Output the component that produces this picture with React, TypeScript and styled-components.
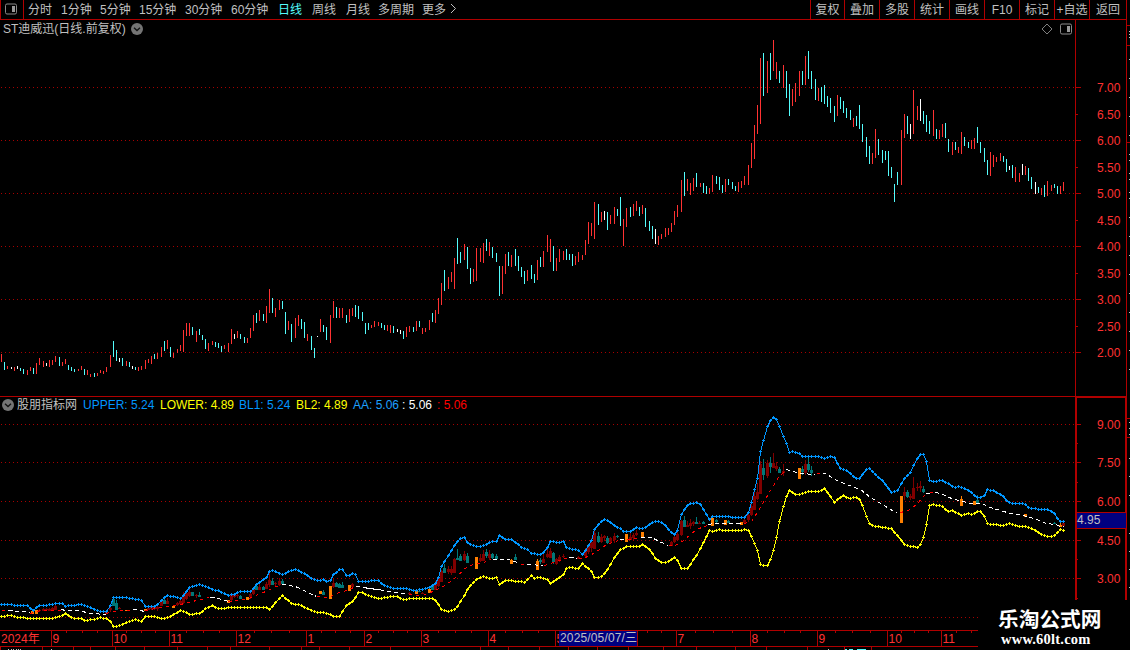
import React from "react";
import styled, { createGlobalStyle } from "styled-components";

const C = {
  line: "#b00000",
  grid: "#a80000",
  label: "#ff3232",
  text: "#c0c0c0",
  up: "#ff3232",
  down: "#54fcfc",
  flat: "#ffffff",
  blue: "#0096ff",
  yellow: "#ffff00",
};

const SANS = '"Liberation Sans", "Noto Sans CJK SC", sans-serif';

const GlobalStyle = createGlobalStyle`
  html, body { margin: 0; background: #000; overflow: hidden; }
  svg { display: block; flex: none; }
`;

/* ---------- data: every block has a pixel origin, values are in thirds of a pixel ---------- */

type Block = { x: number; y: number; d: string };

const PRICE: Block[] = [
  {
    x: 0, y: 270,
    d: `4 252 276 r,13 276 300 c,22 288 297 r,34 291 297 w,43 291 303 r,52 288 297 w,61 294 303 c,70 297 312 c,82 300 315 r,91 291 303 r,100 294 312 c,109 279 312 r,118 264 285 r,130 273 291 r,139 279 288 w,148 270 291 r,157 270 285 r,166 258 276 r,178 261 288 c,187 276 288 r,196 267 282 r,205 285 300 c,214 291 303 c,223 297 306 c,235 297 303 r,244 288 300 r,253 297 315 c,262 300 315 r,271 312 321 r,283 309 321 c,292 309 318 r,301 300 309 r,310 303 312 r,319 291 306 r,331 255 291 r,340 213 261 c,349 240 273 c,358 264 276 w,367 264 288 c,379 273 288 r,388 276 291 c,397 288 297 w,406 291 300 c,415 291 303 r,424 288 300 r,436 270 297 r,445 267 279 r,454 258 282 r,463 252 267 c,472 249 267 r,484 231 261 r,493 213 243 c,502 210 237 r,511 231 261 c,520 249 264 r,532 237 249 r,541 225 243 r,550 180 246 r,559 159 198 r,568 159 198 r,577 171 195 c,589 183 216 r,598 177 195 c,607 195 210 c,616 207 237 c,625 219 243 r,637 213 225 r,646 216 231 c,655 219 234 c,664 228 246 c,673 225 237 r,685 219 246 r,694 177 222 r,703 192 207 w,712 183 204 r,721 192 207 c,733 201 219 c,742 204 219 r,751 174 204 r,760 135 183 r,769 129 159 c,778 120 153 r,790 132 153 c,799 108 159 r,808 57 129 r,817 84 129 c,826 114 141 r,838 90 120 r,847 93 117 c,856 126 192 c,865 153 180 r,874 162 216 c,886 144 204 r,895 135 168 r,904 147 177 c,913 156 204 c,922 192 213 r,934 198 240 c,943 234 264 c,952 198 201 w,961 147 186 r,970 165 186 c,979 171 210 c,991 135 219 r,1000 93 144 r,1009 111 144 c,1018 114 144 r,1027 114 144 r,1039 135 159 c,1048 117 156 r,1057 114 138 r,1066 105 141 c,1075 108 147 c,1087 126 153 c`,
  },
  {
    x: 360, y: 220,
    d: `16 309 342 c,25 309 330 c,34 315 324 r,43 303 321 r,55 306 318 r,64 309 324 c,73 315 330 c,82 315 333 r,91 315 339 r,100 318 339 c,112 327 336 w,121 330 342 w,130 333 357 c,139 321 351 r,148 318 336 r,160 321 336 c,169 303 333 r,178 303 321 c,187 324 342 r,196 324 336 r,208 300 330 r,217 279 306 c,226 270 309 r,235 234 282 r,244 189 255 r,253 150 213 c,265 171 207 r,274 156 186 r,283 114 207 r,292 54 132 c,301 96 129 c,313 72 120 r,322 81 147 c,331 144 192 c,340 147 186 r,349 84 183 r,361 84 126 r,370 69 129 r,379 57 93 c,388 66 108 r,397 81 114 c,409 99 126 c,418 138 228 c,427 138 222 r,436 102 162 r,445 96 138 c,454 105 141 r,466 87 138 c,475 108 153 c,484 141 171 c,493 153 192 c,502 150 183 r,514 135 177 c,523 162 189 c,532 120 180 r,541 111 141 c,550 93 141 r,562 45 96 r,571 57 126 r,580 78 153 c,589 114 153 r,598 87 126 r,610 93 120 r,619 87 120 c,628 102 120 c,637 102 138 c,646 108 135 r,655 96 126 r,667 105 120 r,676 60 105 r`,
  },
  {
    x: 580, y: 185,
    d: `25 111 177 r,34 114 153 r,43 51 162 r,55 57 120 c,64 81 111 r,73 78 105 w,82 81 135 c,91 90 117 r,103 66 117 r,112 72 93 c,121 36 123 c,130 102 183 r,139 69 126 r,151 66 96 c,160 57 93 r,169 48 78 r,178 66 93 c,187 60 87 r,196 69 126 c`,
  },
  {
    x: 640, y: 30,
    d: `28 573 603 c,37 588 627 c,46 597 642 w,55 618 645 r,64 612 627 r,76 594 621 r,85 594 615 r,94 579 606 r,103 543 585 r,112 525 561 r,124 450 546 r,133 426 498 c,142 447 483 r,151 459 495 r,160 444 483 r,169 429 471 c,181 459 471 r,190 459 489 c,199 468 492 c,208 474 492 r,217 435 486 r,229 438 462 c,238 441 480 c,247 465 489 c,256 447 486 r,265 447 465 c,277 456 477 c,286 468 483 c,295 456 486 r,304 453 474 r,313 438 465 r,325 405 465 r,334 339 414 r,343 285 387 r,352 225 312 r,361 84 282 r,370 69 198 c,382 93 189 r,391 69 150 c,400 30 123 r,409 96 147 r,418 123 159 c,430 105 174 r,439 123 204 c,448 162 258 c,457 177 228 r,466 159 216 r,478 123 198 r,487 123 165 c,496 78 165 r,505 63 147 c,514 123 177 c,526 147 210 c,535 174 213 r,544 171 216 c,553 165 222 c,562 198 231 c,571 204 249 c,583 228 276 c,592 195 258 r,601 201 237 c,610 213 249 c,619 234 264 c,631 240 270 c,640 264 291 r,649 258 288 c,658 225 297 c,667 282 336 c,679 321 381 c,688 348 402 c,697 369 402 r,706 297 384 r,715 327 375 c,727 360 399 c,736 363 390 c,745 363 438 c,754 411 444 c,763 462 516 c,772 426 465 c`,
  },
  {
    x: 880, y: 80,
    d: `64 150 315 r,73 102 174 r,82 108 162 c,91 132 177 w,100 30 162 r,112 78 120 r,121 57 123 w,130 93 132 c,139 105 156 c,148 123 162 c,160 90 168 r,169 147 177 c,178 150 177 r,187 132 171 r,196 129 174 c,205 177 216 c,217 186 225 r,226 186 210 c,235 201 219 r,244 156 222 r,253 171 198 c,265 186 204 c,274 180 207 r,283 174 207 r,292 141 189 c,301 186 219 c,313 204 246 c,322 240 285 c,331 216 288 r,340 225 261 r,349 231 246 r,361 219 243 r,370 228 246 c,379 237 276 c,388 258 270 w,397 255 294 c,406 261 306 r,418 279 306 r,427 252 285 w,436 258 285 r,445 264 303 c,454 291 327 c,466 306 342 w,475 321 339 c,484 324 345 r,493 315 351 c,502 303 348 r,514 315 333 r,523 312 324 c,532 318 342 c,541 318 342 r,550 306 333 r`,
  },
];

const UPPER: Block[] = [
  { x: 0, y: 560, d: `4 133,82 136,100 151,109 142,118 136,130 136,166 130,187 130,196 139,205 136,247 133,265 139,301 154,318 153,331 136,340 113,379 112,424 121,436 139,466 138,500 106,544 115,571 80,598 73,628 82,637 89,655 90,685 106,700 103,721 95,751 94,769 72,799 52,808 34,817 31,847 43,871 30,889 29,919 42,937 58,952 61,970 58,979 64,991 60,1000 43,1018 29,1027 29,1039 46,1048 45,1057 40,1066 44,1075 64` },
  { x: 360, y: 490, d: `7 273,55 271,73 286,100 296,139 295,165 301,187 298,208 293,225 280,235 262,244 230,253 213,274 181,286 159,301 144,313 142,325 160,334 167,355 170,373 166,391 154,409 154,418 136,436 148,457 148,484 172,505 178,514 190,541 193,556 184,571 155,595 157,610 155,619 173,655 180,667 194,676 180,694 150,703 118,721 96,733 89,748 94,760 106,781 116,790 125,811 124,829 113,847 116,862 110,880 95,900 94,910 100,925 117,943 133,955 115,964 73,976 51,991 40,1009 37` },
  { x: 700, y: 400, d: `1 312,28 358,37 350,136 351,145 337,154 306,163 268,172 235,181 154,190 121,202 80,211 61,220 51,229 58,238 80,250 110,259 130,268 157,280 154,298 161,307 169,355 169,373 175,391 169,403 172,421 205,445 215,466 234,478 236,499 207,508 205,526 223,547 241,574 277,592 271,613 234,631 217,640 196,652 175,661 163,670 163,679 184` },
  { x: 900, y: 390, d: `88 271,100 274,124 271,145 280,160 292,181 289,214 307,229 321,247 321,253 315,262 298,280 300,307 315,325 336,340 341,370 340,391 354,430 358,445 358,463 370,472 386,481 395,490 395` },
];

const LOWER: Block[] = [
  { x: 0, y: 560, d: `4 169,37 166,55 172,91 175,150 175,184 169,196 160,220 174,244 175,253 181,280 178,301 172,320 174,331 184,340 200,358 196,379 187,406 178,424 184,436 169,460 169,484 175,502 172,520 163,541 151,571 163,598 160,616 145,637 136,655 144,694 142,799 142,808 148,826 127,847 106,874 130,904 136,940 154,985 159,1000 169,1018 169,1039 136,1057 123,1075 97` },
  { x: 360, y: 490, d: `7 308,31 320,55 325,97 319,112 320,130 328,160 325,217 326,226 331,235 342,244 358,265 364,283 358,292 350,313 316,325 292,349 268,370 259,388 265,409 263,418 283,433 272,484 274,493 277,514 256,523 265,535 262,562 268,571 280,595 265,610 253,619 235,634 232,655 235,667 220,694 243,703 262,727 259,748 230,766 196,781 178,799 169,835 169,847 163,868 179,889 208,907 220,928 214,943 202,955 214,964 235,982 234,1009 196` },
  { x: 700, y: 400, d: `1 445,28 391,40 394,58 388,76 391,124 391,136 385,145 391,154 409,172 451,181 493,190 496,202 496,211 478,220 451,229 412,238 364,250 320,259 289,268 272,286 283,310 280,328 274,358 274,373 265,403 307,415 295,430 287,448 295,469 293,481 301,499 349,511 376,526 379,574 385,613 433,634 439,652 442,661 433,670 412,679 373` },
  { x: 900, y: 390, d: `88 346,100 343,127 349,145 364,157 361,184 376,202 371,217 373,235 360,250 369,262 401,280 403,310 406,328 400,355 409,379 409,400 418,430 436,448 439,463 436,472 427,481 418,490 420` },
];

/* Middle band: each run carries its own colour and is drawn dashed. */
const MIDDLE: (Block & { red?: boolean })[] = [
  { x: 0, y: 560, d: `4 151,12 151`, red: true },
  { x: 0, y: 560, d: `24 151,60 154,90 158` },
  { x: 0, y: 560, d: `90 160,105 154,130 152,184 150`, red: true },
  { x: 0, y: 560, d: `184 148,196 150,235 151,270 160,318 163` },
  { x: 0, y: 560, d: `318 160,340 153,379 151,400 148`, red: true },
  { x: 0, y: 560, d: `400 148,436 153` },
  { x: 0, y: 560, d: `436 152,500 140,540 134,600 118,628 112`, red: true },
  { x: 0, y: 560, d: `632 112,655 115,685 123` },
  { x: 0, y: 560, d: `685 124,740 118,790 97,830 78,842 72`, red: true },
  { x: 0, y: 560, d: `847 72,885 80,950 109` },
  { x: 0, y: 560, d: `952 109,990 112,1000 103,1048 87,1066 80`, red: true },
  { x: 0, y: 560, d: `1068 79,1090 82,1140 88` },
  { x: 360, y: 490, d: `18 295,55 298,85 304,146 313` },
  { x: 360, y: 490, d: `148 313,187 315,226 302,260 283,285 262,325 226,345 222,380 213,395 208`, red: true },
  { x: 360, y: 490, d: `397 208,445 208,480 221` },
  { x: 360, y: 490, d: `482 222,500 224`, red: true },
  { x: 360, y: 490, d: `502 224,550 226` },
  { x: 360, y: 490, d: `553 225,580 216,625 203`, red: true },
  { x: 360, y: 490, d: `628 203,652 205` },
  { x: 360, y: 490, d: `655 206,670 205,706 187,740 162,776 150`, red: true },
  { x: 360, y: 490, d: `778 149,800 149` },
  { x: 360, y: 490, d: `802 148,840 142`, red: true },
  { x: 360, y: 490, d: `841 142,875 142,905 158,925 165` },
  { x: 360, y: 490, d: `926 166,945 167,970 150,1010 117,1042 105`, red: true },
  { x: 360, y: 490, d: `1045 104,1060 100,1140 100` },
  { x: 700, y: 400, d: `110 371,130 370` },
  { x: 700, y: 400, d: `132 370,155 363,180 322,210 270,235 231,252 213`, red: true },
  { x: 700, y: 400, d: `258 209,298 219,345 223` },
  { x: 700, y: 400, d: `350 220,366 220`, red: true },
  { x: 700, y: 400, d: `368 220,377 221,415 244,480 269,510 291,592 340` },
  { x: 700, y: 400, d: `602 338,625 330,650 312,675 284`, red: true },
  { x: 700, y: 400, d: `676 281,688 280` },
  { x: 700, y: 400, d: `689 277,702 277`, red: true },
  { x: 900, y: 390, d: `105 307,120 309,155 325,210 340,245 341,270 353,330 369,370 376,410 389,440 399,465 402,480 409,490 409` },
];

/* x, wick top, body top, body bottom, wick bottom, colour (r dark red, t teal, o orange) */
const CANDLES: Block[] = [
  { x: 0, y: 560, d: `97 155 155 164 164 o,109 150 150 163 163 o,118 147 150 154 157 r,130 145 147 153 153 r,139 145 147 152 152 r,148 145 149 153 153 r,157 142 146 151 151 r,166 136 140 150 150 r,319 154 156 162 162 r,331 140 145 152 158 r,340 113 117 139 139 t,349 120 130 151 151 t,358 143 145 148 148 r,379 150 150 153 153 o,436 147 147 154 154 o,445 142 144 152 152 r,454 139 143 149 152 r,463 138 141 147 150 r,472 136 141 147 153 r,484 122 125 138 138 r,493 115 122 132 132 t,502 115 125 132 132 r,520 138 138 144 144 o,532 128 131 137 140 r,541 118 125 132 135 r,550 98 108 130 132 r,559 90 99 118 121 r,568 85 96 110 112 r,577 96 97 108 108 t,589 103 107 110 116 r,598 98 105 111 111 t,685 121 121 131 131 o,694 100 104 120 126 r,703 105 107 111 114 r,712 102 106 110 116 r,721 106 108 118 118 t,742 111 111 122 122 o,751 98 102 112 117 r,760 82 87 104 106 r,769 75 80 90 90 t,778 72 81 90 90 r,790 78 82 90 90 t,799 66 73 89 89 r,808 39 61 76 82 r,817 54 63 75 75 t,826 67 70 74 80 r,838 54 63 75 80 r,847 57 64 72 72 t,961 93 93 103 103 o,970 90 98 106 106 t,991 78 78 118 118 o,1000 57 70 81 86 r,1009 66 70 82 82 t,1018 69 73 84 84 t,1027 66 76 84 84 t,1048 75 75 93 93 o,1057 69 72 81 84 r` },
  { x: 360, y: 490, d: `148 308 309 313 313 r,169 303 303 313 313 o,178 297 304 307 307 t,187 307 310 313 313 r,208 297 297 310 310 o,217 284 290 302 302 t,226 275 280 302 302 r,235 262 266 288 292 r,244 240 244 278 278 r,253 222 236 249 249 t,265 230 239 248 252 r,274 229 238 250 255 r,283 204 208 249 249 r,292 177 204 210 212 t,301 192 200 213 213 t,313 183 194 210 214 r,322 189 200 220 220 t,349 203 203 238 238 o,361 192 206 213 217 r,370 180 192 213 213 r,379 177 188 198 206 t,388 180 194 205 210 r,397 189 194 205 209 t,409 194 200 208 210 t,454 208 211 222 222 o,466 192 203 212 212 t,532 207 213 240 240 o,541 204 210 218 222 t,550 192 207 221 221 r,562 177 194 203 206 r,571 176 183 206 206 r,580 188 190 216 224 t,589 204 208 222 227 r,598 196 202 211 217 r,610 194 199 203 206 r,655 199 203 209 209 r,676 174 180 200 204 r,685 162 167 188 193 r,694 144 156 175 186 r,703 120 130 177 177 r,715 126 140 157 160 t,724 132 142 156 160 r,733 136 140 146 154 r,742 139 144 161 163 t,751 141 146 158 160 r,763 130 139 150 160 r,772 135 138 143 144 t,799 133 133 158 158 o,811 130 142 150 152 r,820 129 136 144 150 r,829 122 129 137 140 r,847 128 128 144 144 o,934 153 156 168 170 r,943 138 143 157 160 r,952 120 132 152 152 r,964 90 95 135 138 r,973 78 92 113 113 t,982 93 105 112 112 r,991 88 100 108 117 r,1000 94 98 104 110 r,1009 81 97 104 104 t,1018 94 99 103 103 r,1030 95 97 104 104 t,1057 84 84 108 108 o,1069 87 90 97 100 t,1096 92 92 107 107 o,1105 90 93 99 100 t` },
  { x: 700, y: 400, d: `124 366 366 375 375 o,133 355 361 370 370 r,145 338 345 362 366 r,154 310 318 345 350 r,163 272 288 332 332 r,172 250 278 297 300 r,181 184 192 284 284 r,190 177 204 227 240 t,202 180 189 228 234 r,211 173 189 203 220 t,220 159 189 204 204 r,229 187 200 207 214 r,238 201 208 219 219 t,250 194 214 220 228 r,298 206 206 239 239 o,307 200 207 216 225 t,316 182 192 220 227 r,325 171 192 212 216 t,334 200 210 221 230 t,604 288 288 369 369 o,613 263 278 290 300 r,622 270 276 291 294 t,631 283 290 294 300 r,640 231 264 297 297 r,652 250 262 266 275 r,661 243 260 264 276 r,670 260 267 278 280 t` },
  { x: 900, y: 390, d: `184 320 327 350 350 o,223 333 333 347 347 o,232 316 330 339 342 t,376 374 374 383 383 o,463 396 399 401 402 t,481 400 407 413 413 o,490 392 400 410 410 r` },
];

const third = (o: number, v: string) => o + Math.floor(Number(v) / 3);

const bars = PRICE.flatMap((b) =>
  b.d.split(",").map((s) => {
    const [x, t, e, c] = s.trim().split(" ");
    return { x: third(b.x, x), top: third(b.y, t), end: third(b.y, e), c };
  })
);

const points = (blocks: Block[]) =>
  blocks.flatMap((b) =>
    b.d.split(",").map((s) => {
      const [x, y] = s.trim().split(" ");
      return [third(b.x, x), third(b.y, y)] as [number, number];
    })
  );

/* One value per trading day, read off the key points. */
const sample = (blocks: Block[]) => {
  const p = points(blocks);
  return bars.map(({ x }) => {
    let i = 1;
    while (i < p.length - 1 && p[i][0] < x) i++;
    const [x0, y0] = p[i - 1];
    const [x1, y1] = p[i];
    const k = Math.max(0, Math.min(1, (x - x0) / (x1 - x0 || 1)));
    return [x, Math.round(y0 + (y1 - y0) * k)];
  });
};

const candles = CANDLES.flatMap((b) =>
  b.d.split(",").map((s) => {
    const [x, w0, b0, b1, w1, c] = s.trim().split(" ");
    return {
      x: third(b.x, x), w0: third(b.y, w0), b0: third(b.y, b0), b1: third(b.y, b1), w1: third(b.y, w1), c,
    };
  })
);

/* ---------- styled parts ---------- */

const Screen = styled.div`
  position: relative;
  width: 1130px;
  height: 650px;
  overflow: hidden;
  background: #000;
  color: ${C.text};
  font: 12px/18px ${SANS};
  display: flex;
  flex-direction: column;
`;

const Toolbar = styled.div`
  display: flex;
  width: 1127px;
  height: 20px;
  box-sizing: border-box;
  border: solid ${C.line};
  border-width: 0 1px 1px 1px;
  line-height: 20px;
  white-space: nowrap;
  flex: none;
`;

const LayoutButton = styled.div`
  width: 18px;
  padding: 3px 0 0 4px;
  border-right: 1px solid ${C.line};
`;

const Periods = styled.div`
  display: flex;
  flex: 1;
  padding-left: 4px;
`;

const Period = styled.span<{ $w: number; $active?: boolean }>`
  width: ${(p) => p.$w}px;
  color: ${(p) => (p.$active ? C.down : C.text)};
`;

const Tool = styled.div<{ $w: number }>`
  width: ${(p) => p.$w}px;
  box-sizing: border-box;
  border-left: 1px solid ${C.line};
  text-align: center;
`;

const Panel = styled.div<{ $h: number }>`
  display: flex;
  height: ${(p) => p.$h}px;
  box-sizing: border-box;
  flex: none;
`;

const Plot = styled.div<{ $ruled?: boolean }>`
  display: flex;
  flex-direction: column;
  width: 1075px;
  box-sizing: border-box;
  border-bottom: ${(p) => (p.$ruled ? `1px solid ${C.line}` : "0")};
`;

const Caption = styled.div<{ $h: number }>`
  display: flex;
  align-items: center;
  height: ${(p) => p.$h}px;
  padding: 0 2px;
  white-space: nowrap;
  flex: none;
`;

const Title = styled.span`
  width: 128px;
  padding-left: 1px;
  line-height: 19px;
  box-sizing: content-box;
`;

const CaptionTools = styled.div`
  display: flex;
  gap: 7px;
  margin-left: auto;
`;

const IndicatorName = styled.span`
  width: 66px;
  padding-left: 3px;
  line-height: 16px;
`;

const Reading = styled.span<{ $c: string; $w: number }>`
  width: ${(p) => p.$w}px;
  color: ${(p) => p.$c};
  line-height: 16px;
`;

const DateTag = styled.div`
  position: absolute;
  left: 559px;
  top: 631px;
  width: 79px;
  height: 15px;
  line-height: 15px;
  padding-left: 1px;
  box-sizing: border-box;
  background: #000080;
  border-right: 1px solid ${C.line};
  letter-spacing: 0.15px;
  white-space: nowrap;
`;

const PriceTag = styled.div`
  position: absolute;
  left: 1077px;
  top: 512px;
  width: 49px;
  height: 17px;
  box-sizing: border-box;
  line-height: 15px;
  background: #000080;
  border: solid ${C.line};
  border-width: 1px 0;
`;

const Watermark = styled.div`
  position: absolute;
  left: 978px;
  top: 600px;
  width: 152px;
  height: 50px;
  box-sizing: border-box;
  padding: 7px 0 0 20px;
  background: #000;
  color: #fff;
  white-space: nowrap;
`;

const SiteName = styled.div`
  font: bold 20.7px/23px "Noto Sans CJK SC", sans-serif;
`;

const SiteUrl = styled.div`
  font: bold 14.5px/16px "Liberation Serif", serif;
  padding: 1px 0 0 3px;
  letter-spacing: 0.22px;
`;

/* ---------- drawings ---------- */

const PanelIcon = () => (
  <svg width="13" height="12" viewBox="0 0 13 12">
    <rect x="0.5" y="1" width="11" height="10" rx="1.5" fill="none" stroke="#8a8a8a" />
    <rect x="7" y="3" width="3" height="6" fill="#9a9a9a" />
  </svg>
);

const DiamondIcon = () => (
  <svg width="12" height="12" viewBox="0 0 12 12">
    <path d="M6 1 L11 6 L6 11 L1 6 Z" fill="none" stroke="#808080" />
  </svg>
);

const DropIcon = () => (
  <svg width="12" height="12" viewBox="0 0 12 12">
    <circle cx="6" cy="6" r="6" fill="#747474" />
    <path d="M3 4.8 L6 7.6 L9 4.8" fill="none" stroke="#111" strokeWidth="1.3" />
  </svg>
);

const ArrowIcon = () => (
  <svg width="7" height="18" viewBox="0 0 7 18">
    <path d="M1 4 L5.5 8.5 L1 13" fill="none" stroke={C.text} />
  </svg>
);

const GridLine = ({ y }: { y: number }) => (
  <line x1="1" x2="1074" y1={y + 0.5} y2={y + 0.5} stroke={C.grid} strokeDasharray="1 3" />
);

const barColor: Record<string, string> = { r: C.up, c: C.down, w: C.flat };
const candleColor: Record<string, string> = { r: "#800000", t: "#007878", o: "#ff8000" };

const PriceChart = () => (
  <svg width="1075" height="358" viewBox="0 38 1075 358" shapeRendering="crispEdges">
    {[87, 140, 193, 246, 299, 352].map((y) => <GridLine key={y} y={y} />)}
    {bars.map((b) => (
      <rect key={b.x} x={b.x} y={b.top} width="1" height={b.end - b.top} fill={barColor[b.c]} />
    ))}
  </svg>
);

const Band = ({ data, color }: { data: number[][]; color: string }) => (
  <g fill="none" stroke={color}>
    <polyline points={data.map(([x, y]) => `${x + 0.5},${y + 0.5}`).join(" ")} />
    <path d={data.map(([x, y]) => `M${x - 1} ${y + 0.5}h3M${x + 0.5} ${y - 1}v3`).join("")} />
  </g>
);

const BandChart = () => (
  <svg width="1075" height="216" viewBox="0 414 1075 216" shapeRendering="crispEdges">
    {[424, 462, 501, 540, 578, 617].map((y) => <GridLine key={y} y={y} />)}
    {candles.map((k) => (
      <g key={k.x} fill={candleColor[k.c]}>
        <rect x={k.x} y={k.w0} width="1" height={k.w1 - k.w0} />
        <rect x={k.x - 1} y={k.b0} width="3" height={Math.max(1, k.b1 - k.b0)} />
      </g>
    ))}
    {MIDDLE.map((m, i) => (
      <polyline
        key={i}
        points={points([m]).map(([x, y]) => `${x + 0.5},${y + 0.5}`).join(" ")}
        fill="none"
        stroke={m.red ? "#ff0000" : "#ffffff"}
        strokeDasharray={m.red ? "3 4" : "4 3"}
      />
    ))}
    <Band data={sample(UPPER)} color={C.blue} />
    <Band data={sample(LOWER)} color={C.yellow} />
  </svg>
);

const axisText = { fill: C.label, fontSize: 12, fontFamily: SANS };

const PriceAxis = () => (
  <svg width="55" height="377" viewBox="1075 20 55 377">
    <g fill={C.line} shapeRendering="crispEdges">
      <rect x="1075" y="20" width="1" height="377" />
      <rect x="1126" y="20" width="1" height="377" />
      <rect x="1075" y="396" width="52" height="1" />
      {[25, 45, 142].map((y) => <rect key={y} x="1127" y={y} width="3" height="1" />)}
      {[0, 1, 2, 3, 4, 5].map((i) => <rect key={i} x="1075" y={87 + i * 53} width="6" height="1" />)}
      {[0, 1, 2, 3, 4].map((i) => <rect key={i} x="1075" y={114 + i * 53} width="3" height="1" />)}
    </g>
    <g fill="#c0c0c0">
      {[31, 34, 37, 59, 78, 97, 116, 135, 154, 160, 173, 179, 192, 198, 217, 236, 255, 274, 293, 312, 331, 350, 369].map((y) => (
        <rect key={y} x="1129" y={y} width="1" height="1" />
      ))}
    </g>
    {Array.from({ length: 11 }, (_, i) => (
      <text key={i} x="1097" y={Math.round(91.5 + i * 26.5 + (i % 2 ? 1 : 0))} {...axisText}>
        {(7 - i / 2).toFixed(2)}
      </text>
    ))}
  </svg>
);

const BandAxis = () => (
  <svg width="55" height="233" viewBox="1075 397 55 233">
    <g fill={C.line} shapeRendering="crispEdges">
      <rect x="1075" y="397" width="2" height="203" />
      <rect x="1125" y="397" width="2" height="203" />
      <rect x="1075" y="397" width="52" height="1" />
      {[418, 437].map((y) => <rect key={y} x="1127" y={y} width="3" height="1" />)}
      {[424, 462, 501, 540, 578].map((y) => <rect key={y} x="1075" y={y} width="6" height="1" />)}
      {[443, 482, 559, 598].map((y) => <rect key={y} x="1075" y={y} width="3" height="1" />)}
    </g>
    <g fill="#c0c0c0">
      {[422, 428, 434, 458, 476, 495, 533, 551, 569, 587].map((y) => (
        <rect key={y} x="1129" y={y} width="1" height="1" />
      ))}
    </g>
    {[[9, 429], [7.5, 467], [6, 506], [4.5, 545], [3, 583]].map(([v, y]) => (
      <text key={v} x="1097" y={y} {...axisText}>{v.toFixed(2)}</text>
    ))}
  </svg>
);

const MONTHS: [string, number][] = [
  ["9", 51], ["10", 112], ["11", 169], ["12", 236], ["1", 306], ["2", 364], ["3", 421],
  ["4", 488], ["5", 555], ["", 617], ["7", 676], ["8", 750], ["9", 817], ["10", 887], ["11", 941], ["", 1000],
];

const MINOR = MONTHS.slice(0, -1).flatMap(([, x], i) => {
  const step = (MONTHS[i + 1][1] - x) / 4;
  return [1, 2, 3].map((k) => Math.round(x + step * k));
});

const TimeAxis = () => (
  <svg width="1130" height="20" viewBox="0 630 1130 20">
    <g fill={C.line} shapeRendering="crispEdges">
      <rect x="0" y="630" width="978" height="1" />
      <rect x="0" y="646" width="978" height="1" />
      <rect x="0" y="646" width="1" height="4" />
      {MONTHS.map(([, x]) => <rect key={x} x={x} y="630" width="1" height="16" />)}
      {MINOR.map((x) => <rect key={x} x={x} y="631" width="1" height="2" />)}
      {[42, 73, 90, 115, 144, 177, 207, 230, 269, 301, 319, 349, 390, 480, 508, 539, 568, 597, 628, 663, 696, 735, 766, 807, 844, 871].map((x) => (
        <rect key={x} x={x} y="647" width="1" height="3" />
      ))}
    </g>
    <g fill="#c0c0c0">
      {[8, 11, 13, 16, 18, 20, 51, 828].map((x) => <rect key={x} x={x} y="649" width="1" height="1" />)}
    </g>
    <g fill={C.down}>
      <rect x="845" y="649" width="2" height="1" />
      <rect x="849" y="649" width="4" height="1" />
      <rect x="857" y="649" width="9" height="1" />
    </g>
    <text x="1" y="643" {...axisText}>2024年</text>
    {MONTHS.filter(([m]) => m).map(([m, x]) => <text key={x} x={x + 1.5} y="643" {...axisText}>{m}</text>)}
  </svg>
);

const PERIODS: [string, number][] = [
  ["分时", 33], ["1分钟", 39], ["5分钟", 39], ["15分钟", 46], ["30分钟", 46], ["60分钟", 47],
  ["日线", 34], ["周线", 34], ["月线", 32], ["多周期", 44], ["更多", 28],
];

const TOOLS: [string, number][] = [
  ["复权", 34], ["叠加", 35], ["多股", 35], ["统计", 35], ["画线", 35], ["F10", 35], ["标记", 35], ["+自选", 35], ["返回", 37],
];

const READINGS: [string, string, number][] = [
  ["UPPER: 5.24", C.blue, 77],
  ["LOWER: 4.89", C.yellow, 79],
  ["BL1: 5.24", C.blue, 57],
  ["BL2: 4.89", C.yellow, 57],
  ["AA: 5.06", "#1ea0ff", 49],
  [": 5.06", "#ffffff", 35],
  [": 5.06", "#ff0000", 35],
];

export default function App() {
  return (
    <Screen>
      <GlobalStyle />
      <Toolbar>
        <LayoutButton><PanelIcon /></LayoutButton>
        <Periods>
          {PERIODS.map(([label, w]) => (
            <Period key={label} $w={w} $active={label === "日线"}>{label}</Period>
          ))}
          <ArrowIcon />
        </Periods>
        {TOOLS.map(([label, w]) => <Tool key={label} $w={w}>{label}</Tool>)}
      </Toolbar>
      <Panel $h={377}>
        <Plot $ruled>
          <Caption $h={18}>
            <Title>ST迪威迅(日线.前复权)</Title>
            <DropIcon />
            <CaptionTools>
              <DiamondIcon />
              <PanelIcon />
            </CaptionTools>
          </Caption>
          <PriceChart />
        </Plot>
        <PriceAxis />
      </Panel>
      <Panel $h={233}>
        <Plot>
          <Caption $h={16}>
            <DropIcon />
            <IndicatorName>股朋指标网</IndicatorName>
            {READINGS.map(([label, c, w], i) => (
              <Reading key={i} $c={c} $w={w}>{label}</Reading>
            ))}
          </Caption>
          <Caption $h={1} />
          <BandChart />
        </Plot>
        <BandAxis />
      </Panel>
      <TimeAxis />
      <DateTag>2025/05/07/三</DateTag>
      <PriceTag>4.95</PriceTag>
      <Watermark>
        <SiteName>乐淘公式网</SiteName>
        <SiteUrl>www.60lt.com</SiteUrl>
      </Watermark>
    </Screen>
  );
}
